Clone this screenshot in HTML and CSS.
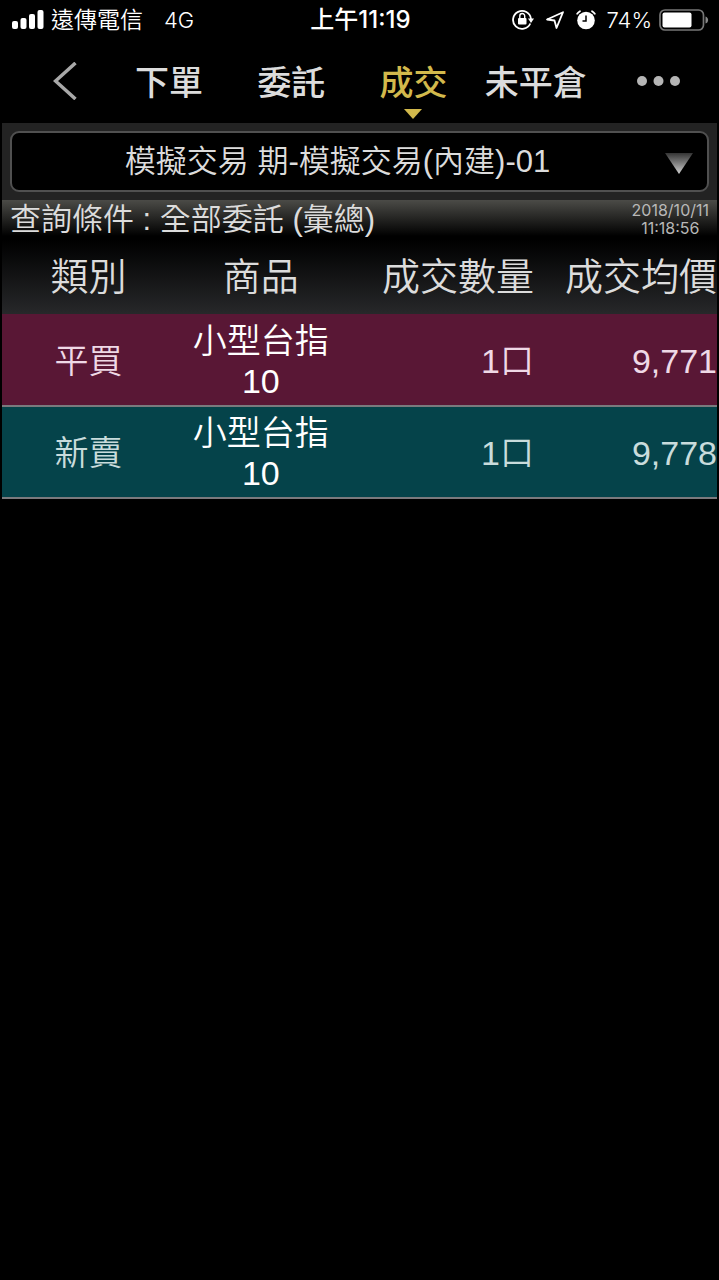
FILE: index.html
```html
<!DOCTYPE html>
<html lang="zh-Hant">
<head>
<meta charset="utf-8">
<meta name="viewport" content="width=device-width, initial-scale=1">
<title>成交</title>
<link rel="stylesheet" href="styles.css">
</head>
<body>
<div class="status">
  <div class="status-left">
    <svg class="signal" width="32" height="20" viewBox="0 0 32 20" fill="#fff" aria-hidden="true">
      <rect x="0" y="11" width="6" height="8" rx="2"/>
      <rect x="8.500" y="8" width="6" height="11" rx="2"/>
      <rect x="17" y="4" width="6" height="15" rx="2"/>
      <rect x="25.500" y="0" width="6" height="19" rx="2"/>
    </svg>
    <span>遠傳電信</span>
    <span class="network">4G</span>
  </div>
  <div class="status-time">上午11:19</div>
  <div class="status-right">
    <svg width="22" height="22" viewBox="0 0 22 22" fill="none" aria-hidden="true">
      <path d="M18.300 14.500A9 9 0 1 1 19 10" stroke="#fff" stroke-width="1.800"/>
      <path d="M16 9.500h6l-3 4.500z" fill="#fff"/>
      <rect x="6" y="9" width="8.500" height="6.500" rx="1" fill="#fff"/>
      <path d="M7.800 9V7a2.400 2.400 0 0 1 4.900 0v2" stroke="#fff" stroke-width="1.400"/>
    </svg>
    <svg width="20" height="20" viewBox="0 0 20 20" fill="none" aria-hidden="true">
      <path d="M18 2.200 2 9.500l7.500 1 2 7.500z" stroke="#fff" stroke-width="1.800" stroke-linejoin="round"/>
    </svg>
    <svg width="20" height="20" viewBox="0 0 20 20" fill="none" aria-hidden="true">
      <circle cx="10" cy="10.500" r="8.800" fill="#fff"/>
      <path d="M1.200 3.800A12 12 0 0 1 4 1.200M18.800 3.800A12 12 0 0 0 16 1.200" stroke="#fff" stroke-width="1.800" stroke-linecap="round"/>
      <path d="M10 5.500v5.500H6.500" stroke="#000" stroke-width="1.500"/>
    </svg>
    <span class="percent">74%</span>
    <svg width="50" height="22" viewBox="0 0 50 22" fill="none" aria-hidden="true">
      <rect x="1" y="1" width="43.500" height="20" rx="5" stroke="#777" stroke-width="1.700"/>
      <rect x="3.500" y="3.500" width="29" height="15" rx="2" fill="#fff"/>
      <path d="M46.500 7.500c3.500 1 3.500 6 0 7z" fill="#888"/>
    </svg>
  </div>
</div>

<nav class="tabs">
  <button class="tab back" type="button" aria-label="返回">
    <svg width="24" height="38" viewBox="0 0 24 38" fill="none" aria-hidden="true">
      <path d="M22.500 1 2.500 19l20 18" stroke="#a8a8a8" stroke-width="3.500"/>
    </svg>
  </button>
  <button class="tab" type="button">下單</button>
  <button class="tab" type="button">委託</button>
  <button class="tab active" type="button" aria-current="page">成交</button>
  <button class="tab" type="button">未平倉</button>
  <button class="tab" type="button" aria-label="更多">
    <svg width="44" height="10" viewBox="0 0 44 10" fill="#b5b5b5" aria-hidden="true">
      <circle cx="6" cy="5" r="5"/><circle cx="22.500" cy="5" r="5"/><circle cx="39" cy="5" r="5"/>
    </svg>
  </button>
</nav>

<main class="content">
  <div class="account">
    <select class="account-select" aria-label="帳號">
      <option>模擬交易 期-模擬交易(內建)-01</option>
    </select>
    <svg class="account-arrow" width="28" height="21" viewBox="0 0 28 21" aria-hidden="true">
      <defs><linearGradient id="arrow" x1="0" y1="0" x2="0" y2="1"><stop offset="0" stop-color="#333"/><stop offset="1" stop-color="#d0d0d0"/></linearGradient></defs>
      <path d="M0 0h28L14 21z" fill="url(#arrow)"/>
    </svg>
  </div>

  <div class="query">
    <span class="query-text">查詢條件 : 全部委託 (彙總)</span>
    <time class="query-time" datetime="2018-10-11T11:18:56">2018/10/11<br>11:18:56</time>
  </div>

  <table class="deals">
    <thead>
      <tr><th class="kind">類別</th><th class="product">商品</th><th class="quantity">成交數量</th><th class="price">成交均價</th></tr>
    </thead>
    <tbody>
      <tr class="buy"><td>平買</td><td class="name">小型台指<br>10</td><td class="num">1口</td><td class="num">9,771</td></tr>
      <tr class="sell"><td>新賣</td><td class="name">小型台指<br>10</td><td class="num">1口</td><td class="num">9,778</td></tr>
    </tbody>
  </table>
</main>
</body>
</html>
```
FILE: styles.css
```css
* { box-sizing: border-box; }

body {
  margin: 0;
  min-height: 100vh;
  background: #000;
  color: #dcdcdc;
  font-family: "Liberation Sans", "Noto Sans CJK TC", sans-serif;
  font-weight: 350;
}

button, select { font: inherit; color: inherit; }
svg { display: block; flex: none; }

.status {
  display: grid;
  grid-template-columns: 1fr auto 1fr;
  align-items: center;
  height: 40px;
  padding: 0 10px 0 12px;
  color: #fff;
  font-family: Inter, "Noto Sans CJK TC", sans-serif;
  font-size: 23px;
  line-height: 40px;
}
.status-left, .status-right { display: flex; align-items: center; }
.status-left { gap: 7px; }
.network { margin-left: 14px; font-size: 22px; }
.status-time { font-size: 24px; font-weight: 500; }
.status-right { justify-content: flex-end; gap: 11px; }
.percent { margin-right: -4px; font-size: 22px; }

.tabs {
  display: grid;
  grid-template-columns: 108px repeat(5, 1fr);
  height: 83px;
}
.tab {
  position: relative;
  display: flex;
  align-items: center;
  justify-content: center;
  padding: 0 0 2px;
  border: 0;
  background: none;
  font-size: 34px;
  font-weight: 500;
  white-space: nowrap;
}
.back { padding-left: 22px; }
.active { color: #d2b94c; }
.active::after {
  content: "";
  position: absolute;
  bottom: 4px;
  left: 50%;
  margin-left: -9px;
  border: 9px solid transparent;
  border-top: 10px solid #d2b94c;
  border-bottom: 0;
}

.content { margin: 0 2px; overflow: hidden; }

.account {
  position: relative;
  padding: 8px;
  background: #232323;
}
.account-select {
  display: block;
  width: 100%;
  height: 61px;
  padding: 0 44px 0 0;
  appearance: none;
  border: 2px solid #505050;
  border-radius: 9px;
  background: #000;
  font-size: 31px;
  text-align: center;
  text-align-last: center;
}
.account-arrow {
  position: absolute;
  top: 30px;
  right: 24px;
  pointer-events: none;
}

.query {
  display: flex;
  justify-content: space-between;
  height: 40px;
  padding: 0 8px;
  background: linear-gradient(#4b4b47, #000 90%);
}
.query-text { font-size: 31px; line-height: 40px; }
.query-time {
  padding-top: 1px;
  color: #b8b8b8;
  font-family: Inter, sans-serif;
  font-size: 16px;
  font-weight: 400;
  line-height: 18px;
  text-align: center;
}

.deals {
  width: 100%;
  border-collapse: collapse;
  table-layout: fixed;
  text-align: center;
}
.deals thead { background: linear-gradient(#000, #27282a); }
.deals th {
  height: 74px;
  padding: 0;
  font-size: 38px;
  font-weight: 350;
  line-height: 56px;
  white-space: nowrap;
}
.kind { width: 24.200%; }
.product { width: 24%; }
.quantity { width: 26.200%; }
.deals .quantity, .deals .price, .num { text-align: right; }
.deals td {
  height: 92px;
  padding: 2px 0 0;
  border-bottom: 2px solid #7a7a7e;
  font-size: 34px;
  line-height: 40px;
}
.buy { background: #591735; }
.sell { background: #05434a; }
.deals .buy { color: #efd9e6; }
.deals .sell { color: #c9dcdc; }
.deals .name { color: #fff; }
```
